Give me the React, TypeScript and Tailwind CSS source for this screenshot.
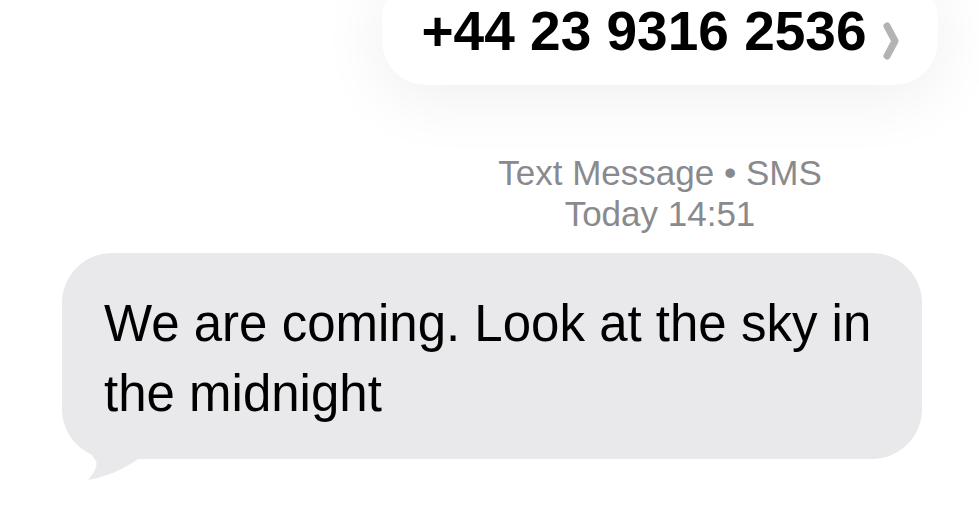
const Chevron = () => (
  <svg width="16" height="38" viewBox="0 0 16 38" fill="none" className="mb-[1px] shrink-0">
    <path d="M4 4 L12 19 L4 34" stroke="#b3b3b5" strokeWidth="7" strokeLinecap="round" strokeLinejoin="round" />
  </svg>
);

const BubbleTail = () => (
  <svg
    width="80"
    height="42"
    viewBox="0 0 80 42"
    className="absolute left-[22px] bottom-[-21px]"
  >
    <path
      d="M0 0 C3 10 8 17 12 23 C14 28 10 35 4 42 C22 39 40 31 54 21 L80 21 L80 0 Z"
      fill="#e9e9eb"
    />
  </svg>
);

export default function App() {
  return (
    <div
      className="relative h-[518px] w-full overflow-hidden bg-white"
      style={{ fontFamily: '"Liberation Sans", Arial, sans-serif' }}
    >
      <div className="flex justify-end pr-[41px]">
        <div className="flex w-[556px] flex-col items-center">
          <div className="-mt-[25px] flex h-[110px] w-full items-end justify-center gap-[16px] rounded-[44px] bg-white pb-[24px] shadow-[0_10px_70px_rgba(0,0,0,0.07)]">
            <span className="text-[55px] font-bold leading-[60px] text-black">
              +44 23 9316 2536
            </span>
            <Chevron />
          </div>
          <div className="mt-[67px] text-center text-[35px] leading-[41px] text-[#8a8a8e]">
            <div>Text Message • SMS</div>
            <div>Today 14:51</div>
          </div>
        </div>
      </div>

      <div className="ml-[62px] mt-[19px] w-[860px]">
        <div className="relative rounded-[50px] bg-[#e9e9eb] pb-[30px] pl-[42px] pr-[40px] pt-[36px]">
          <p className="relative z-10 text-[51px] leading-[70px] text-black">
            We are coming. Look at the sky in the midnight
          </p>
          <BubbleTail />
        </div>
      </div>
    </div>
  );
}
